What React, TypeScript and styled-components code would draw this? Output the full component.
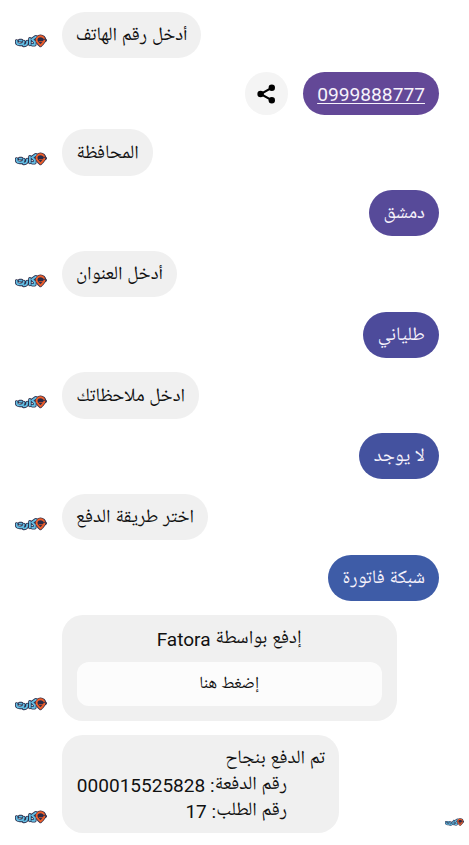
import React from 'react';
import styled, { createGlobalStyle } from 'styled-components';

const Global = createGlobalStyle`
  * { box-sizing: border-box; }
  body {
    margin: 0;
    background: #fff;
    overflow: hidden;
    font-family: Roboto, "Noto Naskh Arabic UI", "Noto Naskh Arabic", "DejaVu Sans", sans-serif;
    font-size: 19.05px;
    color: #111;
  }
`;

const Chat = styled.main`
  width: 469px;
  height: 845px;
  padding: 11.7px 0 0 15px;
  display: flex;
  flex-direction: column;
  gap: 14.46px;
`;

const Row = styled.div<{ $mine?: boolean }>`
  display: flex;
  flex: none;
  align-items: ${p => (p.$mine ? 'center' : 'flex-end')};
  justify-content: ${p => (p.$mine ? 'flex-end' : 'flex-start')};
  gap: 15px;
  padding-right: ${p => (p.$mine ? '29.7px' : '5px')};
`;

const Bubble = styled.div<{ $w: number; $color?: string; $h?: number }>`
  display: flex;
  align-items: center;
  justify-content: center;
  width: ${p => p.$w}px;
  height: ${p => p.$h ?? 46.3}px;
  padding-top: ${p => (p.$h ? 2 : 4)}px;
  border-radius: 23px;
  background: ${p => p.$color ?? '#f0f0f0'};
  color: ${p => (p.$color ? '#f6f2fb' : '#111')};
  line-height: 26px;
  white-space: nowrap;
`;

const Phone = styled.a`
  color: inherit;
  font-size: 19.2px;
  text-decoration: underline;
  text-decoration-thickness: 1px;
  text-underline-offset: 2px;
`;

const Share = styled.button`
  display: grid;
  place-items: center;
  width: 42.5px;
  height: 42.5px;
  padding: 0;
  border: 0;
  border-radius: 50%;
  background: #f4f4f4;
`;

const Card = styled.section`
  width: 334.5px;
  height: 105.2px;
  padding: 12px 14.5px 14.5px;
  border-radius: 21px;
  background: #f0f0f0;
  display: flex;
  flex-direction: column;
  justify-content: space-between;
  text-align: center;
`;

const CardTitle = styled.div`
  line-height: 26px;
`;

const PayButton = styled.button`
  height: 44.5px;
  padding: 0;
  border: 0;
  border-radius: 12px;
  background: #fcfcfc;
  color: #111;
  font: inherit;
  font-size: 17px;
`;

const Receipt = styled.div`
  width: 277px;
  height: 98.4px;
  padding: 12.2px 14px 0;
  border-radius: 21px;
  background: #f0f0f0;
  line-height: 26px;
  white-space: nowrap;
`;

const Line = styled.div<{ $indent?: boolean }>`
  padding-right: ${p => (p.$indent ? '38px' : '0')};
`;

const LogoSvg = styled.svg`
  flex: none;
  display: block;
  margin-bottom: 9.5px;
`;

const Side = styled.div`
  margin-left: auto;
  display: flex;
  margin-bottom: -2px;
`;

const wordmark =
  'M1.6 7c-.2 2.8 1.2 3.4 3.2 3.4s4-.2 4-3M4.6 6.6h2M8.6 11.4c2.4.2 3.6-1 3.6-4M14.9 4.8v5.8M20.8 2.8 17 5.4l2.8 2.6v2.7h-2.6';
const pin = 'M25.5 2.2a4 4 0 0 1 4 3.9c0 2.3-2.3 3.3-4 5.3-1.8-2-4-3-4-5.3a4 4 0 0 1 4-3.9z';

function Logo({ width = 32 }: { width?: number }) {
  return (
    <LogoSvg width={width} height={(width * 14) / 32} viewBox="0 0 32 14">
      <g fill="none" stroke="#2b2c49" strokeWidth="3.5" strokeLinejoin="round" strokeLinecap="round">
        <path d={wordmark} />
        <path d={pin} fill="#2b2c49" />
        <path d="M27 6.2h3.2" />
      </g>
      <path d={wordmark} fill="none" stroke="#63bde3" strokeWidth="1.85" strokeLinejoin="round" strokeLinecap="round" />
      <path d={pin} fill="none" stroke="#ef5f2b" strokeWidth="1.9" />
      <path d="M24.2 6.6 27.6 5.3h3" fill="none" stroke="#2b2c49" strokeWidth="1.1" />
      <path d="M24 7.6h4.2" stroke="#e2572c" strokeWidth=".8" />
    </LogoSvg>
  );
}

function Bot({ w, children }: { w: number; children: React.ReactNode }) {
  return (
    <Row>
      <Logo />
      <Bubble $w={w} dir="rtl">{children}</Bubble>
    </Row>
  );
}

function Mine({ w, color, children }: { w: number; color: string; children: React.ReactNode }) {
  return (
    <Row $mine>
      <Bubble $w={w} $color={color} dir="rtl">{children}</Bubble>
    </Row>
  );
}

export default function App() {
  return (
    <>
      <Global />
      <Chat>
        <Bot w={139.3}>أدخل رقم الهاتف</Bot>
        <Row $mine>
          <Share aria-label="مشاركة">
            <svg width="19" height="20" viewBox="0 0 19 20">
              <path d="M15 3.7 3.7 10 15 16.3" fill="none" stroke="#000" strokeWidth="2.1" />
              <circle cx="14.8" cy="3.8" r="3.2" />
              <circle cx="3.6" cy="10" r="3.2" />
              <circle cx="14.8" cy="16.2" r="3.2" />
            </svg>
          </Share>
          <Bubble $w={136.5} $h={42.5} $color="#634897"><Phone>0999888777</Phone></Bubble>
        </Row>
        <Bot w={91}>المحافظة</Bot>
        <Mine w={70} color="#574a99">دمشق</Mine>
        <Bot w={115}>أدخل العنوان</Bot>
        <Mine w={76} color="#4d4b9b">طلياني</Mine>
        <Bot w={137.3}>ادخل ملاحظاتك</Bot>
        <Mine w={80} color="#44529f">لا يوجد</Mine>
        <Bot w={146}>اختر طريقة الدفع</Bot>
        <Mine w={111} color="#3e5ca7">شبكة فاتورة</Mine>
        <Row>
          <Logo />
          <Card>
            <CardTitle dir="rtl">إدفع بواسطة Fatora</CardTitle>
            <PayButton dir="rtl">إضغط هنا</PayButton>
          </Card>
        </Row>
        <Row>
          <Logo />
          <Receipt dir="rtl">
            <Line>تم الدفع بنجاح</Line>
            <Line $indent>رقم الدفعة: 000015525828</Line>
            <Line $indent>رقم الطلب: 17</Line>
          </Receipt>
          <Side><Logo width={19} /></Side>
        </Row>
      </Chat>
    </>
  );
}
